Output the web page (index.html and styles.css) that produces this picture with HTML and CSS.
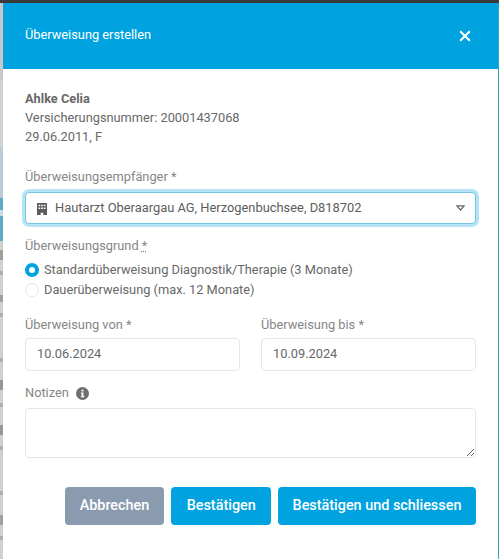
FILE: index.html
```html
<!DOCTYPE html>
<html lang="de">
<head>
<meta charset="utf-8">
<title>Überweisung erstellen</title>
<link rel="stylesheet" href="styles.css">
</head>
<body>
<div class="page">
  <div class="topbar"></div>
  <div class="stage">
    <div class="backdrop"></div>
    <main class="modal">
      <header class="modal-head">
        <h1 class="modal-title">Überweisung erstellen</h1>
        <svg class="close" viewBox="0 0 12 12" aria-hidden="true"><path d="M1.2 1.2l9.6 9.6M10.8 1.2l-9.6 9.6"/></svg>
      </header>
      <div class="modal-body">
        <section class="patient">
          <div class="patient-name">Ahlke Celia</div>
          <div>Versicherungsnummer: 20001437068</div>
          <div>29.06.2011, F</div>
        </section>

        <div class="label label-recipient">Überweisungsempfänger *</div>
        <div class="select">
          <svg class="building" viewBox="0 0 10 12" aria-hidden="true"><path fill-rule="evenodd" d="M.5 0h9a.5.5 0 0 1 .5.5V12H6.3V9.8H3.7V12H0V.5A.5.5 0 0 1 .5 0zM1.5 1.7v1.6h1.7V1.7zm2.6 0v1.6h1.8V1.7zm2.7 0v1.6h1.7V1.7zM1.5 4.4V6h1.7V4.4zm2.6 0V6h1.8V4.4zm2.7 0V6h1.7V4.4z"/></svg>
          <span class="select-text">Hautarzt Oberaargau AG, Herzogenbuchsee, D818702</span>
          <svg class="caret" viewBox="0 0 9 6" aria-hidden="true"><path d="M.9.8h7.2L4.5 5z"/></svg>
        </div>

        <div class="label label-reason">Überweisungsgrund <span class="abbr">*</span></div>
        <div class="radios">
          <div class="radio-row"><span class="radio radio-on"></span>Standardüberweisung Diagnostik/Therapie (3 Monate)</div>
          <div class="radio-row"><span class="radio"></span>Dauerüberweisung (max. 12 Monate)</div>
        </div>

        <div class="dates">
          <div class="date-field">
            <div class="label">Überweisung von *</div>
            <div class="input">10.06.2024</div>
          </div>
          <div class="date-field">
            <div class="label">Überweisung bis *</div>
            <div class="input">10.09.2024</div>
          </div>
        </div>

        <div class="label label-notes">Notizen
          <svg class="info" viewBox="0 0 14 14" aria-hidden="true"><circle cx="7" cy="7" r="7" fill="#6f6f6f"/><rect x="6" y="2.9" width="2" height="2" fill="#fff"/><path d="M5.3 6h2.7v3.8h.8V11H5.3V9.8h.8V7.2h-.8z" fill="#fff"/></svg>
        </div>
        <textarea class="notes" aria-label="Notizen"></textarea>

        <div class="actions">
          <button class="btn btn-muted" type="button">Abbrechen</button>
          <button class="btn btn-wide" type="button">Bestätigen</button>
          <button class="btn" type="button">Bestätigen und schliessen</button>
        </div>
      </div>
    </main>
    <div class="edge"></div>
  </div>
</div>
</body>
</html>
```
FILE: styles.css
```css
* { box-sizing: border-box; }
html, body { margin: 0; padding: 0; }
body { width: 499px; height: 559px; overflow: hidden; background: #fff; font-family: Roboto, "Liberation Sans", sans-serif; color: #686868; font-size: 12.8px; }
.page { display: flex; flex-direction: column; height: 559px; }
.topbar { height: 3px; background: #3a3a3a; flex: none; }
.stage { display: flex; flex: 1; min-height: 0; }
.backdrop {
  width: 3px;
  flex: none;
  background: linear-gradient(to bottom,
    #c8c8c8 0 77px, #d2d2d2 77px 144px, #bccbd3 144px 195px,
    #5fa9c9 195px 207px, #c4dde8 207px 213px, #5fa9c9 213px 238px,
    #d0d0d0 238px 247px, #a39e93 247px 257px, #d0d0d0 257px 268px,
    #aeaeae 268px 272px, #d0d0d0 272px 292px, #a0a0a0 292px 299px,
    #d0d0d0 299px 310px, #aeaeae 310px 314px, #d0d0d0 314px 355px,
    #aeaeae 355px 359px, #d0d0d0 359px 377px, #979797 377px 387px,
    #d0d0d0 387px 400px, #aeaeae 400px 404px, #d0d0d0 404px 422px,
    #979797 422px 432px, #d0d0d0 432px 443px, #aeaeae 443px 447px,
    #d0d0d0 447px 488px, #aeaeae 488px 492px, #d0d0d0 492px 512px,
    #a0a0a0 512px 522px, #d0d0d0 522px 533px, #aeaeae 533px 537px, #d0d0d0 537px);
}
.edge { width: 1px; flex: none; background: #2aa7c4; }
.modal { flex: 1; min-width: 0; background: #fff; display: flex; flex-direction: column; }
.modal-head { height: 66px; flex: none; background: #00a3e0; color: #fff; display: flex; align-items: center; justify-content: space-between; padding: 0 27px 0 22px; }
.modal-title { margin: 0; font-size: 12.8px; font-weight: 400; position: relative; top: -2px; }
.close { width: 12px; height: 12px; fill: none; stroke: #fff; stroke-width: 2; }
.modal-body { padding: 20px 22px 0 22px; }
.patient { line-height: 19.2px; }
.patient-name { font-weight: 700; }
.label { line-height: 16px; color: #868686; }
.label-recipient { margin-top: 22.4px; }
.select { margin-top: 7px; height: 32px; border: 1px solid #78c6e3; border-radius: 4px; box-shadow: 0 0 0 3px #b5e4f7; background: #fff; display: flex; align-items: center; padding: 0 10px 0 11px; color: #5c5c5c; }
.building { width: 10px; height: 12px; fill: #5b5b5b; flex: none; margin-right: 8px; margin-top: 1px; }
.select-text { flex: 1; white-space: nowrap; font-size: 12.88px; padding-bottom: 2px; }
.caret { width: 9px; height: 6px; fill: none; stroke: #666; stroke-width: 1.2; flex: none; }
.label-reason { margin-top: 14px; }
.abbr { text-decoration: underline dotted; }
.radios { margin-top: 6px; }
.radio-row { display: flex; align-items: center; height: 20px; gap: 5px; padding-bottom: 2px; }
.radio { width: 14px; height: 14px; border-radius: 50%; border: 1px solid #e5e5e5; background: #fff; flex: none; margin-top: 2px; }
.radio-on { border: 4px solid #00a3e0; }
.dates { display: grid; grid-template-columns: 215px 215px; column-gap: 21px; margin-top: 17px; }
.input { margin-top: 5px; height: 33px; border: 1px solid #e6e6e6; border-radius: 4px; padding: 0 11px 2px; display: flex; align-items: center; }
.label-notes { margin-top: 14px; display: flex; align-items: center; gap: 7px; }
.info { width: 13px; height: 13px; }
.notes { display: block; width: 451px; height: 50px; margin: 7px 0 0; border: 1px solid #e6e6e6; border-radius: 4px; background: #fff; outline: none; }
.actions { display: flex; justify-content: flex-end; gap: 7px; margin-top: 29px; }
.btn { height: 38px; border: 0; border-radius: 4px; background: #00a3e0; color: #fff; font-family: inherit; font-size: 14.4px; font-weight: 500; padding: 0 14.6px 2px; }
.btn-muted { background: #8a9bb0; padding: 0 15.2px 2px; }
.btn-wide { padding: 0 15.2px 2px; }
```
